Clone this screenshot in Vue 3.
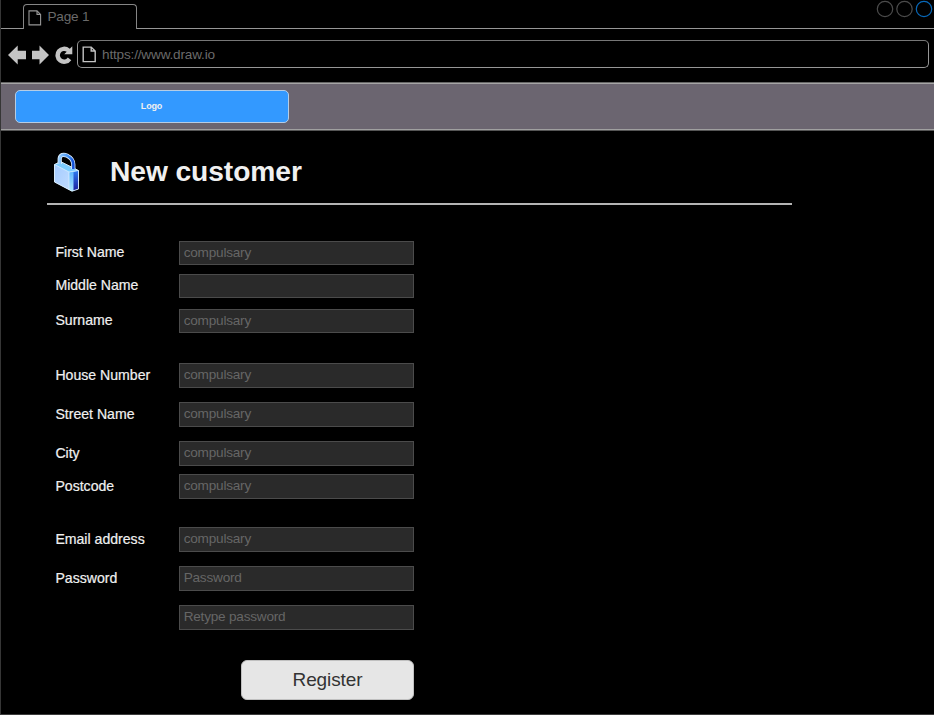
<script setup>
const groups = [
  {
    name: 'person',
    rows: [
      { id: 'first', label: 'First Name', hint: 'compulsary' },
      { id: 'middle', label: 'Middle Name', hint: '' },
      { id: 'surname', label: 'Surname', hint: 'compulsary' },
    ],
  },
  {
    name: 'residence',
    rows: [
      { id: 'house', label: 'House Number', hint: 'compulsary' },
      { id: 'street', label: 'Street Name', hint: 'compulsary' },
      { id: 'city', label: 'City', hint: 'compulsary' },
      { id: 'postcode', label: 'Postcode', hint: 'compulsary' },
    ],
  },
  {
    name: 'account',
    rows: [
      { id: 'email', label: 'Email address', hint: 'compulsary' },
      { id: 'password', label: 'Password', hint: 'Password' },
      { id: 'retype', label: '', hint: 'Retype password' },
    ],
  },
]
</script>

<template>
  <div class="window">
    <div class="tabs">
      <div class="strip-start"></div>
      <div class="tab">
        <svg class="tab-icon" width="14" height="16" viewBox="0 0 14 16">
          <path d="M1 .9H9L12.6 4.4V14.9H1ZM9 .9V4.4H12.6" fill="none" stroke="#969696" stroke-width="1.1" />
        </svg>
        <span>Page 1</span>
      </div>
      <div class="strip-end">
        <svg width="58" height="20" viewBox="0 0 58 20">
          <g fill="none" stroke-width="1.2">
            <circle cx="9" cy="9" r="7.7" stroke="#4b4b4b" />
            <circle cx="28.5" cy="9" r="7.7" stroke="#4b4b4b" />
            <circle cx="48" cy="9" r="7.7" stroke="#0868b8" />
          </g>
        </svg>
      </div>
    </div>

    <div class="toolbar">
      <svg class="nav" width="68" height="22" viewBox="0 0 68 22">
        <g fill="#c4c4c4">
          <path d="M0 11L9.7 1.5V6.7H18V15.3H9.7V20.6Z" />
          <path d="M41 11L31.5 1.5V6.7H24V15.3H31.5V20.6Z" />
          <path d="M64.3 2.2V10.2H56.2L58.7 7.7A4.3 4.3 0 1 0 59.8 13.6L63.3 16.2A8.7 8.7 0 1 1 61.8 4.7Z" />
        </g>
      </svg>
      <div class="address">
        <svg class="address-icon" width="15" height="17" viewBox="0 0 15 17">
          <path d="M1.2 1.1H9.2L13.2 5V15.6H1.2ZM9.2 1.1V5H13.2" fill="none" stroke="#c4c4c4" stroke-width="1.4" />
        </svg>
        <span>https://www.draw.io</span>
      </div>
    </div>

    <header class="banner">
      <div class="logo">Logo</div>
    </header>

    <main class="content">
      <div class="heading">
        <svg class="lock" width="27" height="40" viewBox="0 0 27 40">
          <defs>
            <linearGradient id="front" x1="0" y1="0" x2="1" y2="1">
              <stop offset="0" stop-color="#a4cbff" />
              <stop offset="1" stop-color="#c0dcff" />
            </linearGradient>
            <linearGradient id="side" x1="0" y1="0" x2="0" y2="1">
              <stop offset="0" stop-color="#2f7cf0" />
              <stop offset="1" stop-color="#1a1fa0" />
            </linearGradient>
            <linearGradient id="edge" x1="0" y1="0" x2="0" y2="1">
              <stop offset="0" stop-color="#62b8ff" />
              <stop offset="1" stop-color="#a8e4ff" />
            </linearGradient>
            <linearGradient id="shackle" x1="0" y1="0" x2="1" y2="0">
              <stop offset="0" stop-color="#92cbff" />
              <stop offset=".65" stop-color="#3c8df4" />
              <stop offset="1" stop-color="#1552d8" />
            </linearGradient>
          </defs>
          <path d="M1.5 12.5L7.5 9.5L25.5 18.5V37L19 39.2L1.5 30Z" fill="#7dccff" />
          <path d="M1.5 12.5L16 20V37.8L1.5 30Z" fill="url(#front)" />
          <path d="M16 20L21 19.5V38.5L19 39.2L16 37.8Z" fill="url(#edge)" />
          <path d="M20.5 20L25.5 18.5V37L20.5 38.7Z" fill="url(#side)" />
          <path d="M1.5 12.5L16 20V37.8M16 20L25.5 18.5" fill="none" stroke="#d8efff" stroke-width=".8" />
          <path d="M1.5 12.5L7.5 9.5L25.5 18.5V37L19 39.2L1.5 30Z" fill="none" stroke="#e3f4ff" stroke-width=".9" />
          <path d="M6.7 12V6.5C7.2 2.8 10.5 2 14 3.6C18 5.6 20.3 9 20.3 12.5V17" fill="none" stroke="#e0f0ff" stroke-width="4.2" />
          <path d="M6.7 12V6.5C7.2 2.8 10.5 2 14 3.6C18 5.6 20.3 9 20.3 12.5V17" fill="none" stroke="url(#shackle)" stroke-width="2.7" />
        </svg>
        <h1>New customer</h1>
      </div>

      <form class="form" @submit.prevent>
        <section v-for="group in groups" :key="group.name" :class="['group', group.name]">
          <div v-for="row in group.rows" :key="row.id" :class="['row', row.id]">
            <label>{{ row.label }}</label>
            <div class="field">{{ row.hint }}</div>
          </div>
        </section>
        <button class="register" type="submit">Register</button>
      </form>
    </main>
  </div>
</template>

<style>
body {
  background: #000;
  overflow: hidden;
}
</style>

<style scoped>
.window {
  box-sizing: border-box;
  width: 934px;
  height: 715px;
  border-left: 1px solid #363636;
  border-bottom: 1px solid #3c3c3c;
  background: #000;
  color: #f0f0f0;
  font-family: "Liberation Sans", Arial, sans-serif;
  overflow: hidden;
}
.tabs {
  display: flex;
  height: 29px;
}
.strip-start,
.strip-end {
  box-sizing: border-box;
  border-bottom: 1px solid #969696;
}
.strip-start {
  width: 22px;
}
.tab {
  box-sizing: border-box;
  width: 114px;
  height: 25px;
  margin-top: 4px;
  padding: 0 0 1px 4px;
  display: flex;
  align-items: center;
  gap: 5.5px;
  border: 1px solid #858585;
  border-bottom: none;
  border-radius: 4px 4px 0 0;
  color: #6a6a6a;
  font-size: 13.6px;
  letter-spacing: -0.2px;
}
.tab-icon {
  margin-top: 2px;
}
.strip-end {
  flex: 1;
  display: flex;
  justify-content: flex-end;
}
.toolbar {
  height: 53px;
  display: flex;
  align-items: flex-start;
  padding: 11px 5px 0 7px;
  box-sizing: border-box;
}
.nav {
  margin-top: 4px;
}
.address {
  box-sizing: border-box;
  flex: 1;
  height: 28px;
  margin-left: 1px;
  padding-left: 4px;
  display: flex;
  align-items: center;
  gap: 5px;
  border: 1px solid #969696;
  border-top-color: #777;
  border-radius: 5px;
  color: #6a6a6a;
  font-size: 13.6px;
  letter-spacing: -0.18px;
}
.banner {
  box-sizing: border-box;
  height: 49px;
  padding: 7px 0 0 14px;
  background: #6b6570;
  border-top: 1px solid #666;
  border-bottom: 1px solid #555;
  box-shadow: inset 0 1px #a5a5a5, inset 0 -1px #a0a0a0;
}
.logo {
  box-sizing: border-box;
  width: 274px;
  height: 33px;
  padding-right: 1px;
  border: 1px solid #b6cde5;
  border-radius: 5px;
  background: #3399ff;
  font-size: 9px;
  font-weight: bold;
  letter-spacing: -0.15px;
  line-height: 30px;
  text-align: center;
}
.content {
  padding-left: 46px;
}
.heading {
  box-sizing: border-box;
  width: 745px;
  height: 74px;
  display: flex;
  align-items: flex-start;
  padding: 21px 0 0 6px;
  border-bottom: 2px solid #b4b4b4;
}
.heading h1 {
  margin: 3px 0 0 30px;
  font-size: 28.2px;
  line-height: 32px;
  letter-spacing: -0.07px;
}
.form {
  width: 367px;
  padding-top: 36px;
  display: flex;
  flex-direction: column;
}
.group {
  display: flex;
  flex-direction: column;
}
.row {
  display: flex;
  padding-left: 8px;
}
.row label {
  box-sizing: border-box;
  width: 124px;
  padding-left: 0.4px;
  font-size: 14.1px;
  line-height: 24px;
  -webkit-text-stroke: 0.2px #f0f0f0;
}
.field {
  box-sizing: border-box;
  width: 235px;
  height: 25px;
  padding-left: 3.7px;
  border: 1px solid #4b4b4b;
  background: #2a2a2a;
  color: #666;
  font-size: 13.6px;
  line-height: 22px;
  letter-spacing: -0.22px;
}
.person .field {
  height: 24px;
}
.person label {
  line-height: 22px;
}
.middle {
  margin-top: 9px;
}
.surname {
  margin-top: 11px;
}
.residence {
  margin-top: 30px;
}
.account {
  margin-top: 28px;
}
.street,
.city,
.password,
.retype {
  margin-top: 14px;
}
.postcode {
  margin-top: 8px;
}
.register {
  width: 173px;
  height: 40px;
  margin: 30px 0 0;
  padding: 0;
  align-self: flex-end;
  border: 1px solid #c0c0c0;
  border-radius: 6px;
  background: #e6e6e6;
  color: #333;
  font-family: inherit;
  font-size: 19px;
  letter-spacing: -0.1px;
  line-height: 36px;
}
</style>
